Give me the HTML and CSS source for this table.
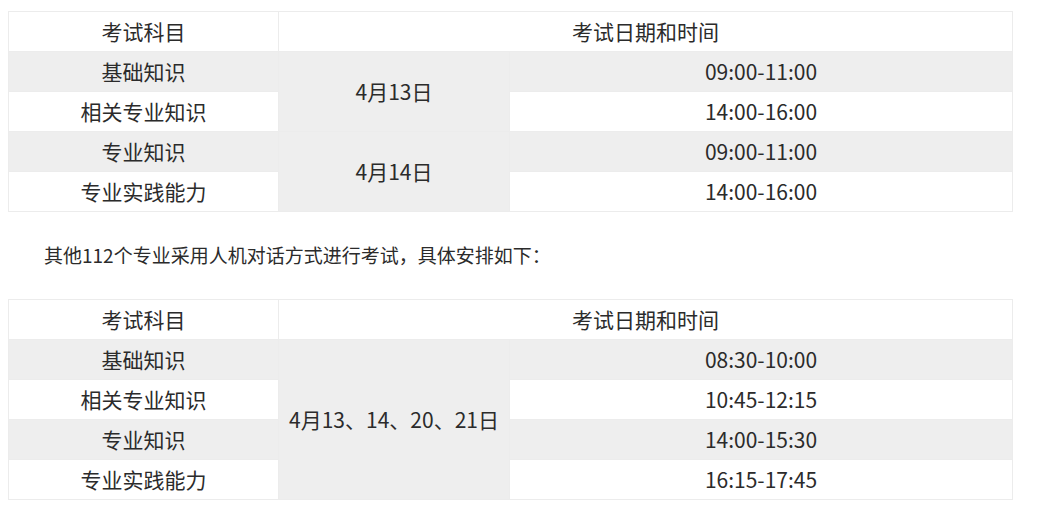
FILE: index.html
```html
<!DOCTYPE html>
<html lang="zh-CN">
<head>
<meta charset="utf-8">
<title>考试安排</title>
<link rel="stylesheet" href="styles.css">
</head>
<body>
<div class="article">
  <table class="schedule">
    <colgroup><col class="c1"><col class="c2"><col class="c3"></colgroup>
    <tr><td>考试科目</td><td colspan="2">考试日期和时间</td></tr>
    <tr class="alt"><td>基础知识</td><td rowspan="2">4月13日</td><td>09:00-11:00</td></tr>
    <tr><td>相关专业知识</td><td>14:00-16:00</td></tr>
    <tr class="alt"><td>专业知识</td><td rowspan="2">4月14日</td><td>09:00-11:00</td></tr>
    <tr><td>专业实践能力</td><td>14:00-16:00</td></tr>
  </table>
  <p class="note">其他112个专业采用人机对话方式进行考试，具体安排如下：</p>
  <table class="schedule">
    <colgroup><col class="c1"><col class="c2"><col class="c3"></colgroup>
    <tr><td>考试科目</td><td colspan="2">考试日期和时间</td></tr>
    <tr class="alt"><td>基础知识</td><td rowspan="4">4月13、14、20、21日</td><td>08:30-10:00</td></tr>
    <tr><td>相关专业知识</td><td>10:45-12:15</td></tr>
    <tr class="alt"><td>专业知识</td><td>14:00-15:30</td></tr>
    <tr><td>专业实践能力</td><td>16:15-17:45</td></tr>
  </table>
</div>
</body>
</html>
```
FILE: styles.css
```css
html, body {
  margin: 0;
  padding: 0;
  background: #fff;
}
body {
  padding: 8px;
  font-family: "Noto Sans CJK SC", "Noto Sans", sans-serif;
  color: #2b2b2b;
}
.article {
  padding-top: 3px;
}
.schedule {
  border-collapse: collapse;
  table-layout: fixed;
  width: 1005px;
  font-size: 21px;
}
.schedule col.c1 { width: 270px; }
.schedule col.c2 { width: 231px; }
.schedule col.c3 { width: 503px; }
.schedule td {
  border: 1px solid #ececec;
  height: 37px;
  padding: 0 0 2px;
  text-align: center;
  vertical-align: middle;
  line-height: 24px;
}
.schedule tr.alt {
  background: #eeeeee;
}
.note {
  margin: 28px 0 29px;
  font-size: 19px;
  line-height: 30px;
  text-indent: 36px;
}
```
